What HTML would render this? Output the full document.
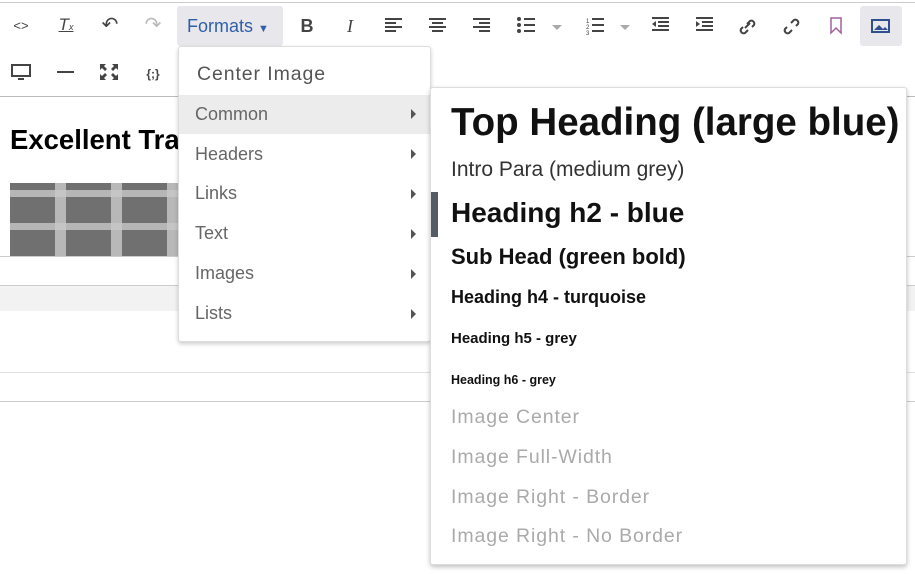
<!DOCTYPE html>
<html><head><style>
*{margin:0;padding:0;box-sizing:border-box}
body{width:915px;height:574px;background:#fff;position:relative;overflow:hidden;font-family:"Liberation Sans",sans-serif}
.a{position:absolute}
.ic{position:absolute;color:#444;font-size:15px;text-align:center;width:30px;line-height:20px}
.m1 div.it{position:absolute;left:16px;font-size:18px;color:#666}
.arr{position:absolute;left:232px;width:0;height:0;border-left:5px solid #555;border-top:5px solid transparent;border-bottom:5px solid transparent}
.m2 div{position:absolute;left:20px;white-space:nowrap;color:#111;font-weight:bold}
.g{color:#aaa!important;font-weight:normal!important;font-size:19.5px;letter-spacing:0.9px}
</style></head><body>
<div class="a" style="left:0;top:2px;width:915px;height:1px;background:#ccc"></div>
<div class="a" style="left:0;top:96px;width:915px;height:1px;background:#bbb"></div>
<!-- row1 -->
<div class="ic" style="left:6px;top:16px;font-size:13px">&lt;&gt;</div>
<div class="ic" style="left:51px;top:15px;font-style:italic;text-decoration:underline;font-size:17px">T<span style="font-size:9px">x</span></div>
<div class="ic" style="left:95px;top:15px;font-size:20px">&#x21B6;</div>
<div class="ic" style="left:138px;top:15px;font-size:20px;color:#bbb">&#x21B7;</div>
<div class="a" style="left:177px;top:6px;width:106px;height:40px;background:#e8e8ec;border-radius:3px"></div>
<div class="a" style="left:187px;top:16px;font-size:18px;color:#2f5fa8">Formats <span style="font-size:11px">&#9660;</span></div>
<div class="ic" style="left:292px;top:16px;font-weight:bold;font-size:18px">B</div>
<div class="ic" style="left:335px;top:16px;font-style:italic;font-size:18px;font-family:'Liberation Serif',serif">I</div>
<svg class="a" style="left:385px;top:18px" width="120" height="16" fill="#444">
<rect x="0" y="0" width="17" height="2"/><rect x="0" y="4" width="11" height="2"/><rect x="0" y="8" width="17" height="2"/><rect x="0" y="12" width="11" height="2"/>
<rect x="44" y="0" width="17" height="2"/><rect x="47" y="4" width="11" height="2"/><rect x="44" y="8" width="17" height="2"/><rect x="47" y="12" width="11" height="2"/>
<rect x="88" y="0" width="17" height="2"/><rect x="94" y="4" width="11" height="2"/><rect x="88" y="8" width="17" height="2"/><rect x="94" y="12" width="11" height="2"/>
</svg>
<svg class="a" style="left:517px;top:17px" width="400" height="20" fill="#444">
<circle cx="2" cy="2" r="2"/><circle cx="2" cy="8" r="2"/><circle cx="2" cy="14" r="2"/><rect x="7" y="1" width="11" height="2"/><rect x="7" y="7" width="11" height="2"/><rect x="7" y="13" width="11" height="2"/>
<path d="M35 8h10l-5 5z" fill="#aaa"/>
<text x="69" y="6" font-size="6">1</text><text x="69" y="12" font-size="6">2</text><text x="69" y="18" font-size="6">3</text>
<rect x="75" y="1" width="12" height="2"/><rect x="75" y="7" width="12" height="2"/><rect x="75" y="13" width="12" height="2"/>
<path d="M103 8h10l-5 5z" fill="#aaa"/>
<rect x="135" y="0" width="17" height="2"/><rect x="141" y="4" width="11" height="2"/><rect x="141" y="8" width="11" height="2"/><rect x="135" y="12" width="17" height="2"/><path d="M135 7l4-3v6z"/>
<rect x="179" y="0" width="17" height="2"/><rect x="185" y="4" width="11" height="2"/><rect x="185" y="8" width="11" height="2"/><rect x="179" y="12" width="17" height="2"/><path d="M183 7l-4-3v6z"/>
<g fill="none" stroke="#444" stroke-width="2"><path d="M226 10l-2 2a3 3 0 0 0 4 4l3-3M230 7l3-3a3 3 0 0 1 4 4l-2 2M228 11l5-5"/>
<path d="M270 10l-2 2a3 3 0 0 0 4 4l3-3M274 6l3-3a3 3 0 0 1 4 4l-2 2"/></g>
<path d="M314 1v15l5-5 5 5v-15z" fill="none" stroke="#a060a0" stroke-width="1.5"/>
</svg>
<div class="a" style="left:860px;top:6px;width:42px;height:40px;background:#e8e8ec;border-radius:3px"></div>
<svg class="a" style="left:871px;top:19px" width="20" height="15"><rect x="1" y="1" width="17" height="12" fill="none" stroke="#2f4f8f" stroke-width="2"/><path d="M3 11l5-5 4 4 2-2 3 3z" fill="#2f4f8f"/></svg>
<!-- row2 -->
<svg class="a" style="left:11px;top:64px" width="160" height="18" fill="#444">
<rect x="1" y="1" width="18" height="11" fill="none" stroke="#444" stroke-width="2"/><rect x="7" y="14" width="6" height="2"/>
<rect x="46" y="7" width="17" height="2"/>
<path d="M89 0h6l-2 2 3 3-2 2-3-3-2 2zM107 0h-6l2 2-3 3 2 2 3-3 2 2zM89 16h6l-2-2 3-3-2-2-3 3-2-2zM107 16h-6l2-2-3-3 2-2 3 3 2-2z"/>
</svg>
<div class="ic" style="left:138px;top:64px;font-size:12px;font-weight:bold">{;}</div>
<!-- content -->
<div class="a" style="left:10px;top:124px;font-size:27.5px;font-weight:bold;color:#000">Excellent Training</div>
<div class="a" style="left:10px;top:183px;width:170px;height:73px;background:repeating-linear-gradient(90deg,#707070 0 45px,#b8b8b8 45px 56px),#888"></div>
<div class="a" style="left:10px;top:183px;width:170px;height:73px;background:repeating-linear-gradient(0deg,transparent 0 26px,rgba(200,200,200,.8) 26px 33px)"></div>
<div class="a" style="left:0;top:256px;width:915px;height:1px;background:#ccc"></div>
<div class="a" style="left:0;top:285px;width:915px;height:26px;background:#f3f2f3;border-top:1px solid #ccc"></div>
<div class="a" style="left:0;top:372px;width:915px;height:1px;background:#e0e0e0"></div>
<div class="a" style="left:0;top:401px;width:915px;height:1px;background:#ccc"></div>
<!-- menu1 -->
<div class="a m1" style="left:178px;top:46px;width:253px;height:296px;background:#fff;border:1px solid #ddd;border-radius:3px;box-shadow:0 2px 4px rgba(0,0,0,.2)">
<div class="it" style="left:18px;top:16px;font-size:19.5px;color:#555;letter-spacing:0.9px">Center Image</div>
<div class="a" style="left:0;top:48px;width:253px;height:39px;background:#ececec"></div>
<div class="it" style="top:57px">Common</div><div class="arr" style="top:62px"></div>
<div class="it" style="top:97px">Headers</div><div class="arr" style="top:102px"></div>
<div class="it" style="top:136px">Links</div><div class="arr" style="top:142px"></div>
<div class="it" style="top:176px">Text</div><div class="arr" style="top:182px"></div>
<div class="it" style="top:216px">Images</div><div class="arr" style="top:222px"></div>
<div class="it" style="top:256px">Lists</div><div class="arr" style="top:262px"></div>
</div>
<!-- menu2 -->
<div class="a m2" style="left:430px;top:87px;width:477px;height:478px;background:#fff;border:1px solid #ddd;border-radius:3px;box-shadow:0 2px 5px rgba(0,0,0,.25)">
<div style="top:13px;font-size:38.5px">Top Heading (large blue)</div>
<div style="top:70px;font-size:21px;font-weight:normal;color:#333">Intro Para (medium grey)</div>
<div class="a" style="left:0;top:104px;width:7px;height:45px;background:#555c66"></div>
<div style="top:109px;font-size:28px">Heading h2 - blue</div>
<div style="top:156px;font-size:22px">Sub Head (green bold)</div>
<div style="top:199px;font-size:18px">Heading h4 - turquoise</div>
<div style="top:242px;font-size:15px">Heading h5 - grey</div>
<div style="top:285px;font-size:12.5px">Heading h6 - grey</div>
<div class="g" style="top:318px">Image Center</div>
<div class="g" style="top:358px">Image Full-Width</div>
<div class="g" style="top:398px">Image Right - Border</div>
<div class="g" style="top:437px">Image Right - No Border</div>
</div>
</body></html>
